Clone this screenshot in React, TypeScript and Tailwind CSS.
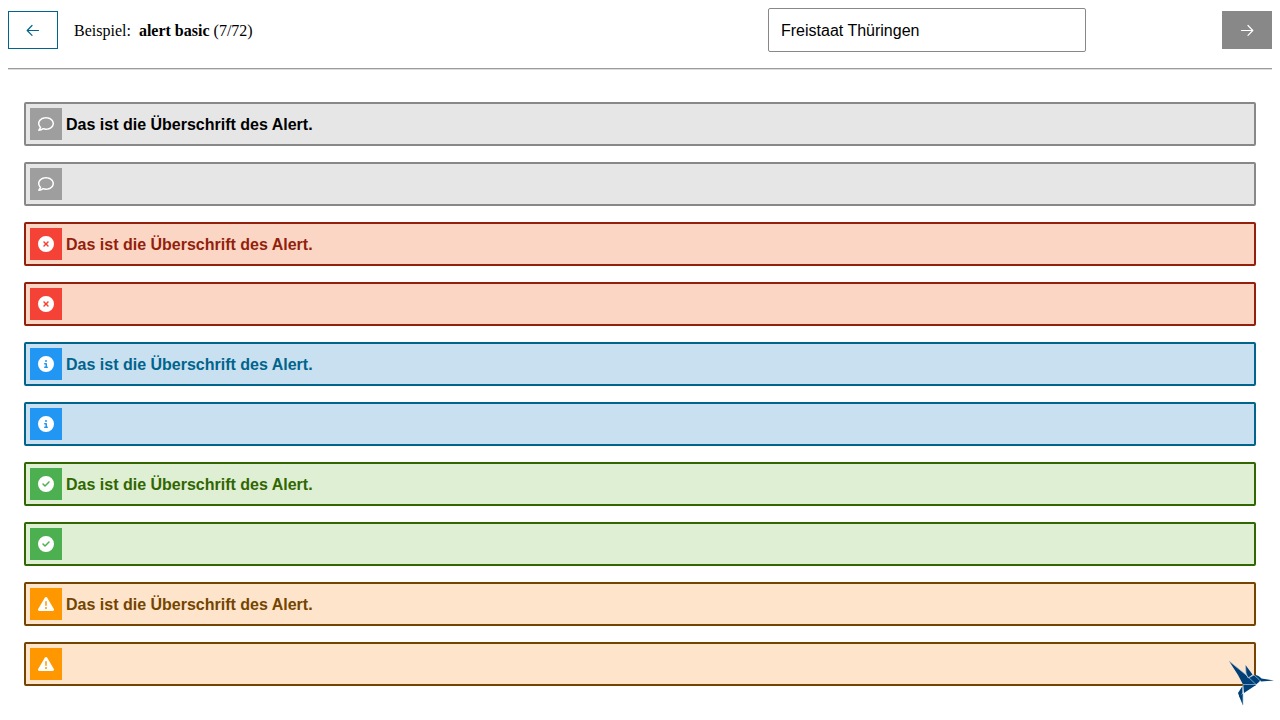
import {
  FaCircleCheck,
  FaCircleInfo,
  FaCircleXmark,
  FaTriangleExclamation,
} from "react-icons/fa6";
import { FaRegComment } from "react-icons/fa";
import type { IconType } from "react-icons";

type Variant = {
  id: string;
  Icon: IconType;
  box: string;
  badge: string;
};

const variants: Variant[] = [
  { id: "note", Icon: FaRegComment, box: "border-[#888888] bg-[#e6e6e6] text-black", badge: "bg-[#9e9e9e]" },
  { id: "error", Icon: FaCircleXmark, box: "border-[#931f0d] bg-[#fcd6c4] text-[#931f0d]", badge: "bg-[#f44336]" },
  { id: "info", Icon: FaCircleInfo, box: "border-[#00648c] bg-[#c8e0f0] text-[#00648c]", badge: "bg-[#2196f3]" },
  { id: "success", Icon: FaCircleCheck, box: "border-[#316600] bg-[#deefd4] text-[#316600]", badge: "bg-[#4caf50]" },
  { id: "warning", Icon: FaTriangleExclamation, box: "border-[#744400] bg-[#fde4ca] text-[#744400]", badge: "bg-[#ff9800]" },
];

function Alert({ variant, heading }: { variant: Variant; heading?: string }) {
  const { Icon } = variant;
  return (
    <div role="alert" className={`flex items-center gap-1 rounded-xs border-2 p-1 ${variant.box}`}>
      <span className={`flex size-8 shrink-0 items-center justify-center text-white ${variant.badge}`}>
        <Icon size={16} aria-hidden />
      </span>
      {heading && <h2 className="pt-0.5 text-base font-bold">{heading}</h2>}
    </div>
  );
}

function Arrow({ back = false }: { back?: boolean }) {
  return (
    <svg width="14" height="12" viewBox="0 0 14 12" fill="none" stroke="currentColor" strokeWidth="1.2" strokeLinecap="round" strokeLinejoin="round" aria-hidden>
      <path d={back ? "M12.5 6.5H1.3M6 1.5L1.2 6.5L6 11.3" : "M1.5 6.5H12.7M8 1.5L12.8 6.5L8 11.3"} />
    </svg>
  );
}

function Bird() {
  return (
    <svg width="46" height="46" viewBox="0 0 46 46" aria-hidden>
      <g fill="#004078">
        <path d="M1 1L17 14L22 19L27.5 25H15L14.5 23.5L10 15Z" />
        <path d="M17.5 5L24.5 14.5L20 18L18 13Z" />
        <path d="M20 18.5L26 15L30 18L32.5 20L31 22L27.5 25Z" />
        <path d="M26 15C29 14.5 31 16 33.5 18.5L46 20.5L33 21.5L31 19.5Z" />
        <path d="M15 25H28L16 33Z" />
        <path d="M14.5 26V33L11.5 37L10 33Z" />
        <path d="M11 36L15 33.5V45.5Z" />
      </g>
      <g stroke="#a5c4db" strokeWidth="0.7" fill="none">
        <path d="M1 1L17 14L28 24.5H15V45M17.5 5L18 13L20 18L26 15L31 19.5L33 21.5" />
      </g>
    </svg>
  );
}

export default function App() {
  return (
    <div className="p-2 font-['Liberation_Sans',Arial,sans-serif] text-base text-black">
      <header className="flex items-center border-b border-[#9a9a9a] pb-4">
        <button type="button" aria-label="Vorheriges Beispiel" className="flex h-[38px] w-[50px] items-center justify-center border border-[#00648c] bg-white text-[#00648c]">
          <Arrow back />
        </button>
        <p className="ml-4 pt-0.5 font-['Liberation_Serif',serif]">
          Beispiel:&nbsp; <strong>alert basic</strong> (7/72)
        </p>
        <select aria-label="Theme" defaultValue="thueringen" className="mr-[136px] ml-auto h-11 w-[318px] appearance-none rounded-xs border border-[#888888] bg-white px-3 pt-0.5">
          <option value="thueringen">Freistaat Thüringen</option>
        </select>
        <button type="button" aria-label="Nächstes Beispiel" className="flex h-[38px] w-[50px] items-center justify-center bg-[#888888] text-white">
          <Arrow />
        </button>
      </header>
      <main className="grid gap-4 border-t border-[#dddddd] px-4 pt-8 pb-4">
        {variants.map((variant) => (
          <section key={variant.id} className="grid gap-4">
            <Alert variant={variant} heading="Das ist die Überschrift des Alert." />
            <Alert variant={variant} />
          </section>
        ))}
      </main>
      <div className="fixed right-1.5 bottom-3.5">
        <Bird />
      </div>
    </div>
  );
}
